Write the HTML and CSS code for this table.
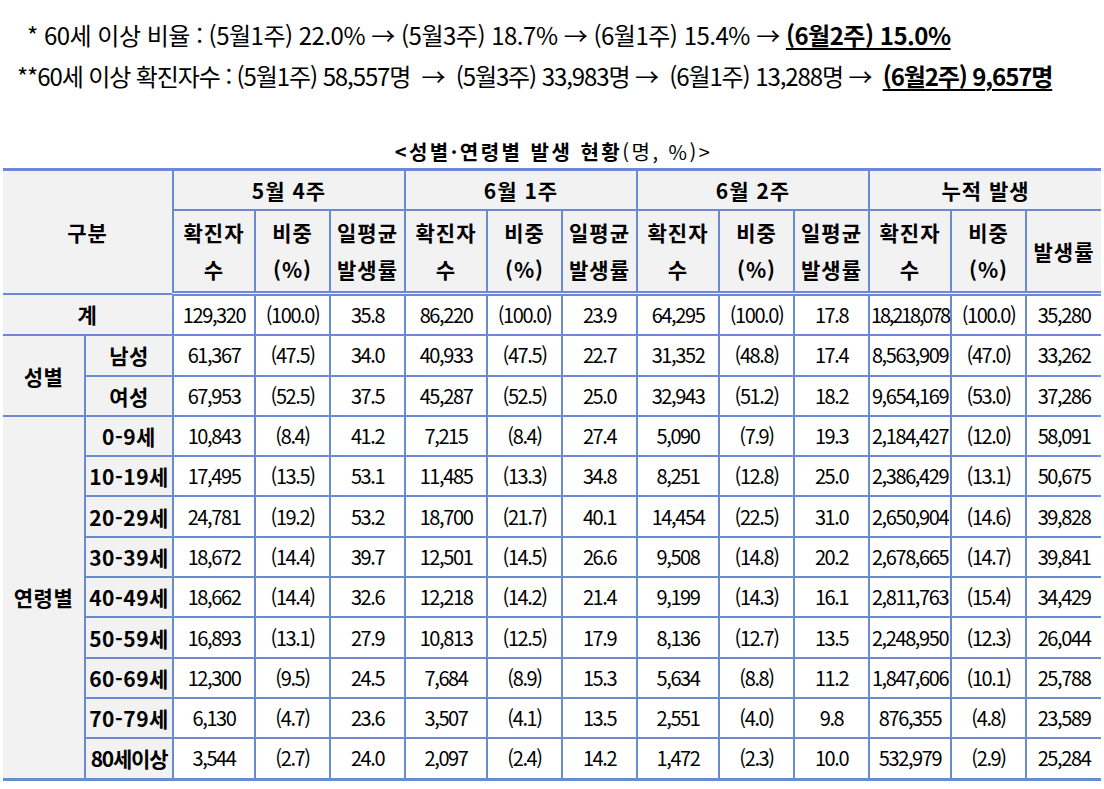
FILE: index.html
```html
<!DOCTYPE html>
<html lang="ko">
<head>
<meta charset="utf-8">
<title>성별·연령별 발생 현황</title>
<link rel="stylesheet" href="styles.css">
</head>
<body>
<div class="page">
  <div class="notes">
    <p class="note n1">* 60세 이상 비율 : (5월1주) 22.0% → (5월3주) 18.7% → (6월1주) 15.4% → <span class="hl">(6월2주) 15.0%</span></p>
    <p class="note n2">**60세 이상 확진자수 : (5월1주) 58,557명&nbsp; →&nbsp; (5월3주) 33,983명 →&nbsp; (6월1주) 13,288명 →&nbsp; <span class="hl">(6월2주) 9,657명</span></p>
  </div>
  <div class="caption"><b>&lt;성별·연령별 발생 현황</b>(명, %)&gt;</div>
  <table class="stats">
    <colgroup>
      <col class="c-l1"><col class="c-l2">
      <col class="c-n"><col class="c-p"><col class="c-r">
      <col class="c-n"><col class="c-p"><col class="c-r">
      <col class="c-n"><col class="c-p"><col class="c-r">
      <col class="c-n"><col class="c-p"><col class="c-r">
    </colgroup>
    <thead>
      <tr class="h1">
        <th colspan="2" rowspan="2">구분</th>
        <th colspan="3">5월 4주</th>
        <th colspan="3">6월 1주</th>
        <th colspan="3">6월 2주</th>
        <th colspan="3">누적 발생</th>
      </tr>
      <tr class="h2">
        <th>확진자<br>수</th><th>비중<br>(%)</th><th>일평균<br>발생률</th>
        <th>확진자<br>수</th><th>비중<br>(%)</th><th>일평균<br>발생률</th>
        <th>확진자<br>수</th><th>비중<br>(%)</th><th>일평균<br>발생률</th>
        <th>확진자<br>수</th><th>비중<br>(%)</th><th>발생률</th>
      </tr>
    </thead>
    <tbody>
      <tr>
        <th colspan="2" class="lbl">계</th>
        <td>129,320</td><td>(100.0)</td><td>35.8</td>
        <td>86,220</td><td>(100.0)</td><td>23.9</td>
        <td>64,295</td><td>(100.0)</td><td>17.8</td>
        <td class="long">18,218,078</td><td>(100.0)</td><td>35,280</td>
      </tr>
      <tr>
        <th rowspan="2" class="lbl">성별</th>
        <th class="lbl sub">남성</th>
        <td>61,367</td><td>(47.5)</td><td>34.0</td>
        <td>40,933</td><td>(47.5)</td><td>22.7</td>
        <td>31,352</td><td>(48.8)</td><td>17.4</td>
        <td>8,563,909</td><td>(47.0)</td><td>33,262</td>
      </tr>
      <tr>
        <th class="lbl sub">여성</th>
        <td>67,953</td><td>(52.5)</td><td>37.5</td>
        <td>45,287</td><td>(52.5)</td><td>25.0</td>
        <td>32,943</td><td>(51.2)</td><td>18.2</td>
        <td>9,654,169</td><td>(53.0)</td><td>37,286</td>
      </tr>
      <tr>
        <th rowspan="9" class="lbl">연령별</th>
        <th class="lbl sub">0-9세</th>
        <td>10,843</td><td>(8.4)</td><td>41.2</td>
        <td>7,215</td><td>(8.4)</td><td>27.4</td>
        <td>5,090</td><td>(7.9)</td><td>19.3</td>
        <td>2,184,427</td><td>(12.0)</td><td>58,091</td>
      </tr>
      <tr>
        <th class="lbl sub">10-19세</th>
        <td>17,495</td><td>(13.5)</td><td>53.1</td>
        <td>11,485</td><td>(13.3)</td><td>34.8</td>
        <td>8,251</td><td>(12.8)</td><td>25.0</td>
        <td>2,386,429</td><td>(13.1)</td><td>50,675</td>
      </tr>
      <tr>
        <th class="lbl sub">20-29세</th>
        <td>24,781</td><td>(19.2)</td><td>53.2</td>
        <td>18,700</td><td>(21.7)</td><td>40.1</td>
        <td>14,454</td><td>(22.5)</td><td>31.0</td>
        <td>2,650,904</td><td>(14.6)</td><td>39,828</td>
      </tr>
      <tr>
        <th class="lbl sub">30-39세</th>
        <td>18,672</td><td>(14.4)</td><td>39.7</td>
        <td>12,501</td><td>(14.5)</td><td>26.6</td>
        <td>9,508</td><td>(14.8)</td><td>20.2</td>
        <td>2,678,665</td><td>(14.7)</td><td>39,841</td>
      </tr>
      <tr>
        <th class="lbl sub">40-49세</th>
        <td>18,662</td><td>(14.4)</td><td>32.6</td>
        <td>12,218</td><td>(14.2)</td><td>21.4</td>
        <td>9,199</td><td>(14.3)</td><td>16.1</td>
        <td>2,811,763</td><td>(15.4)</td><td>34,429</td>
      </tr>
      <tr>
        <th class="lbl sub">50-59세</th>
        <td>16,893</td><td>(13.1)</td><td>27.9</td>
        <td>10,813</td><td>(12.5)</td><td>17.9</td>
        <td>8,136</td><td>(12.7)</td><td>13.5</td>
        <td>2,248,950</td><td>(12.3)</td><td>26,044</td>
      </tr>
      <tr>
        <th class="lbl sub">60-69세</th>
        <td>12,300</td><td>(9.5)</td><td>24.5</td>
        <td>7,684</td><td>(8.9)</td><td>15.3</td>
        <td>5,634</td><td>(8.8)</td><td>11.2</td>
        <td>1,847,606</td><td>(10.1)</td><td>25,788</td>
      </tr>
      <tr>
        <th class="lbl sub">70-79세</th>
        <td>6,130</td><td>(4.7)</td><td>23.6</td>
        <td>3,507</td><td>(4.1)</td><td>13.5</td>
        <td>2,551</td><td>(4.0)</td><td>9.8</td>
        <td>876,355</td><td>(4.8)</td><td>23,589</td>
      </tr>
      <tr>
        <th class="lbl sub tight">80세이상</th>
        <td>3,544</td><td>(2.7)</td><td>24.0</td>
        <td>2,097</td><td>(2.4)</td><td>14.2</td>
        <td>1,472</td><td>(2.3)</td><td>10.0</td>
        <td>532,979</td><td>(2.9)</td><td>25,284</td>
      </tr>
    </tbody>
  </table>
</div>
</body>
</html>
```

FILE: styles.css
```css
html, body {
  margin: 0;
  padding: 0;
  background: #ffffff;
}

body {
  font-family: "Noto Sans CJK KR", "Noto Sans", sans-serif;
  color: #000000;
}

.page {
  width: 1104px;
  padding-top: 14px;
}

.notes {
  display: flex;
  flex-direction: column;
}

.note {
  margin: 0;
  font-size: 24px;
  line-height: 41px;
  letter-spacing: -0.5px;
  white-space: nowrap;
}

.n1 {
  padding-left: 27px;
}

.n2 {
  padding-left: 17px;
  letter-spacing: -1.1px;
}

.hl {
  font-weight: bold;
  text-decoration: underline;
  text-decoration-thickness: 2px;
  text-underline-offset: 3px;
}

.caption {
  margin-top: 41px;
  text-align: center;
  font-size: 20px;
  line-height: 30px;
  letter-spacing: 2.5px;
  padding-left: 3px;
}

.caption b {
  font-weight: bold;
}

.stats {
  margin-top: 1px;
  margin-left: 3px;
  width: 1097px;
  table-layout: fixed;
  border-collapse: collapse;
  border-top: 3px solid #6a8bd4;
  border-bottom: 3px solid #6a8bd4;
}

.c-l1 { width: 82px; }
.c-l2 { width: 88px; }
.c-n { width: 82px; }
.c-p { width: 75px; }
.c-r { width: 75px; }

.stats th,
.stats td {
  border: 2px solid #6a8bd4;
  padding: 0;
  text-align: center;
  vertical-align: middle;
  white-space: nowrap;
}

.stats tr > :first-child {
  border-left: none;
}

.stats tr > :last-child {
  border-right: none;
}

.stats .lbl.sub {
  border-left: 2px solid #6a8bd4;
}

.stats thead th {
  background: #f2f2f2;
  font-weight: bold;
  font-size: 21px;
  letter-spacing: 1px;
}

.h1 th {
  height: 38px;
  line-height: 30px;
}

.h2 th {
  height: 80px;
  line-height: 37px;
  border-bottom: 5px double #6a8bd4;
}

.stats tbody th.lbl {
  background: #f2f2f2;
  font-weight: bold;
  font-size: 21px;
  letter-spacing: 0.5px;
}

.stats tbody th.tight {
  letter-spacing: -1.2px;
}

.stats tbody td {
  height: 38.3px;
  font-size: 20px;
  letter-spacing: -1.4px;
  line-height: 24px;
}

.stats tbody td.long {
  letter-spacing: -2.2px;
}
```
